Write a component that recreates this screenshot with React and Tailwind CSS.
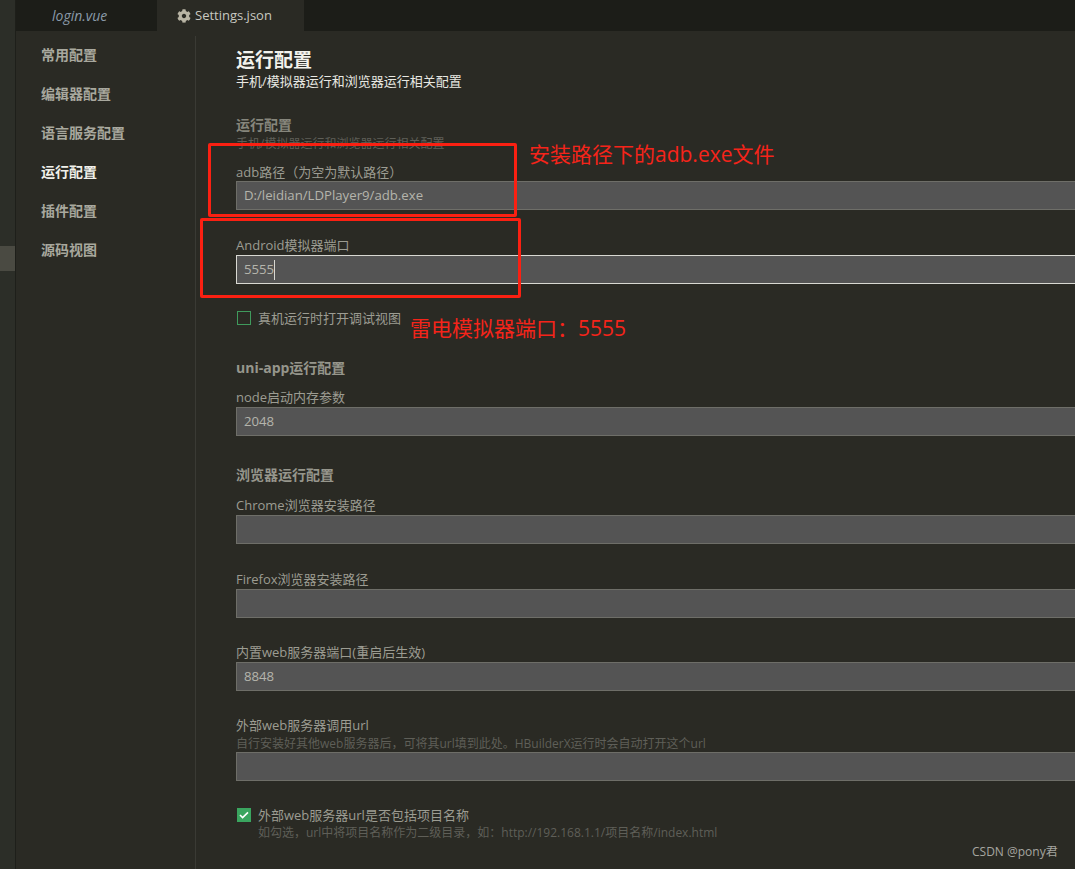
import { FaCog } from "react-icons/fa";

const font = { fontFamily: '"Open Sans", "Noto Sans CJK SC", sans-serif' };

const navItems = ["常用配置", "编辑器配置", "语言服务配置", "运行配置", "插件配置", "源码视图"];

function Field({ label, value, hint, focused, labelClass = "h-[19px]", className = "" }) {
  return (
    <div className={className}>
      <div className={`${labelClass} text-[13px] leading-[18px] text-[#9c9c92]`}>{label}</div>
      {hint ? <div className="h-[17px] text-[12px] leading-[18px] text-[#5f5f58]">{hint}</div> : null}
      <div
        className={`-mr-[10px] flex h-[29px] items-center border px-[7px] pt-px text-[13.2px] text-[#b4b4ac] bg-[#545454] ${
          focused ? "border-[#d8d8d2]" : "border-[#6e6e68]"
        }`}
      >
        {value}
        {focused ? <span className="h-[20px] w-px bg-[#d8d8d2]" /> : null}
      </div>
    </div>
  );
}

function Check({ checked, label, hint, className = "" }) {
  return (
    <div className={`ml-px flex gap-[7px] ${className}`}>
      {checked ? (
        <div className="mt-[1px] flex h-[14px] w-[14px] shrink-0 items-center justify-center bg-[#3aa55f]">
          <svg width="10" height="8" viewBox="0 0 10 8" fill="none" stroke="#fff" strokeWidth="1.6">
            <path d="M1 4l2.6 2.6L9 1.4" />
          </svg>
        </div>
      ) : (
        <div className="mt-[1px] h-[14px] w-[14px] shrink-0 border border-[#3f9a5c]" />
      )}
      <div>
        <div className="h-[16px] text-[13px] leading-[16px] text-[#9c9c92]">{label}</div>
        {hint ? <div className="mt-[1px] text-[12px] leading-[17px] text-[#5f5f58]">{hint}</div> : null}
      </div>
    </div>
  );
}

function Note({ className, children }) {
  return <div className={`absolute whitespace-nowrap text-[21px] leading-[28px] text-[#f5241a] ${className}`}>{children}</div>;
}

export default function App() {
  return (
    <div style={font} className="relative flex h-[869px] w-[1075px] overflow-hidden bg-[#2a2a24]">
      <div className="flex w-[16px] shrink-0 flex-col border-r border-[#1e1f1a] bg-[#2c2e28] pt-[246px]">
        <div className="h-[25px] bg-[#4a4a42]" />
      </div>

      <div className="flex min-w-0 flex-1 flex-col">
        <div className="flex h-[31px] shrink-0 bg-[#1c1d18] text-[13px]">
          <div className="flex w-[141px] items-center pl-[36px] text-[14px] italic text-[#8a9aa8]">login.vue</div>
          <div className="flex w-[147px] items-center gap-[4px] bg-[#2a2a24] pl-[20px] text-[#c8c8c0]">
            <FaCog className="text-[14px] text-[#b8b4a4]" />
            <span>Settings.json</span>
          </div>
        </div>

        <div className="flex min-h-0 flex-1">
          <div className="mt-[5px] w-[180px] shrink-0 border-r border-[#3a3a34] pl-[25px]">
            <div className="-mt-px">
              {navItems.map((item) => (
                <div
                  key={item}
                  className={`h-[39px] text-[14px] font-bold leading-[39px] ${
                    item === "运行配置" ? "text-[#f0f0ea]" : "text-[#a8a89e]"
                  }`}
                >
                  {item}
                </div>
              ))}
            </div>
          </div>

          <div className="min-w-0 flex-1 pl-[40px] pt-[16px]">
            <div className="h-[26px] text-[19px] font-bold leading-[26px] text-[#f2f2ec]">运行配置</div>
            <div className="h-[18px] text-[13px] leading-[16px] text-[#e8e8e2]">手机/模拟器运行和浏览器运行相关配置</div>

            <div className="mt-[24px] h-[20px] text-[14px] font-bold leading-[20px] text-[#86867c]">运行配置</div>
            <div className="mt-px h-[16px] text-[12px] leading-[16px] text-[#5f5f58]">手机/模拟器运行和浏览器运行相关配置</div>

            <Field className="mt-[11px]" labelClass="h-[18px]" label="adb路径（为空为默认路径）" value="D:/leidian/LDPlayer9/adb.exe" />
            <Field className="mt-[26px]" label="Android模拟器端口" value="5555" focused />
            <Check className="mt-[26px]" label="真机运行时打开调试视图" />

            <div className="mt-[32px] h-[20px] text-[14px] font-bold leading-[20px] text-[#96968c]">uni-app运行配置</div>
            <Field className="mt-[10px]" label="node启动内存参数" value="2048" />

            <div className="mt-[29px] h-[20px] text-[14px] font-bold leading-[20px] text-[#96968c]">浏览器运行配置</div>
            <Field className="mt-[11px]" label="Chrome浏览器安装路径" />
            <Field className="mt-[26px]" label="Firefox浏览器安装路径" />
            <Field className="mt-[25px]" label="内置web服务器端口(重启后生效)" value="8848" />
            <Field
              className="mt-[25px]"
              label="外部web服务器调用url"
              hint="自行安装好其他web服务器后，可将其url填到此处。HBuilderX运行时会自动打开这个url"
            />
            <Check
              className="mt-[26px]"
              checked
              label="外部web服务器url是否包括项目名称"
              hint="如勾选，url中将项目名称作为二级目录，如：http://192.168.1.1/项目名称/index.html"
            />
          </div>
        </div>
      </div>

      <div className="absolute left-[208px] top-[143px] h-[74px] w-[309px] rounded-[2px] border-[3px] border-[#fb2012]" />
      <div className="absolute left-[200px] top-[218px] h-[80px] w-[321px] rounded-[2px] border-[3px] border-[#fb2012]" />
      <Note className="left-[529px] top-[140px]">安装路径下的adb.exe文件</Note>
      <Note className="left-[410px] top-[314px]">雷电模拟器端口：5555</Note>
      <div className="absolute left-[972px] top-[844px] text-[12px] leading-[16px] text-[#a6a6a0]">CSDN @pony君</div>
    </div>
  );
}
